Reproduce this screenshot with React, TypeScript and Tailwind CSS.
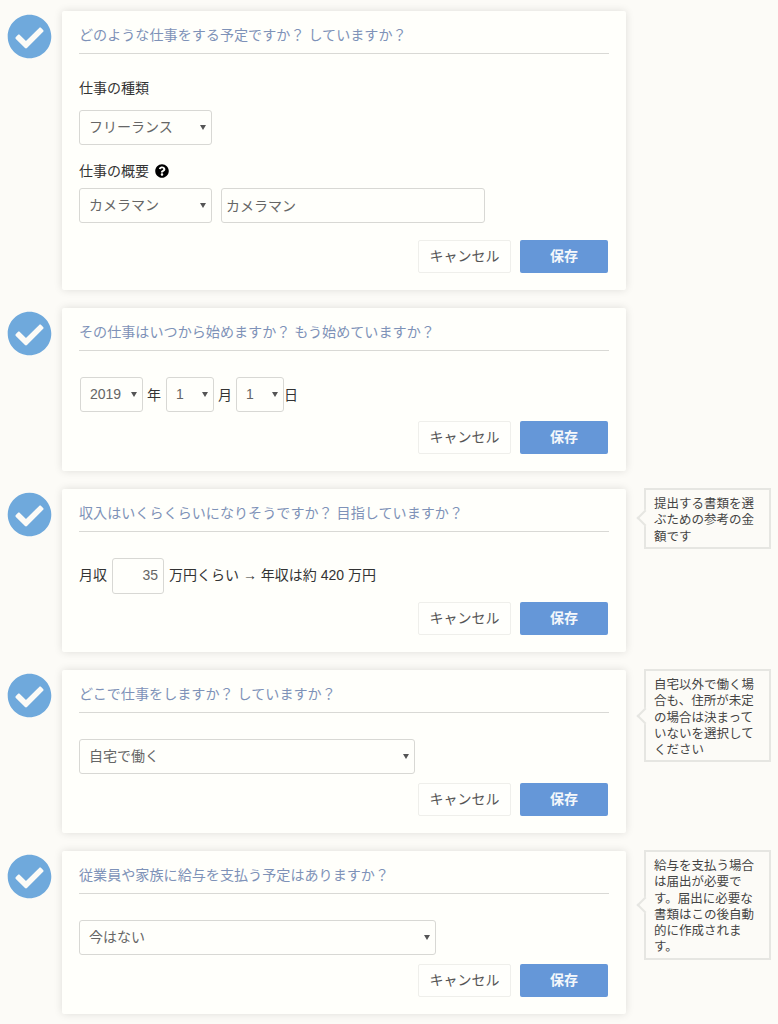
import { FaCheckCircle, FaQuestionCircle } from "react-icons/fa";
import type { ReactNode } from "react";

function Select({ value, className }: { value: string; className: string }) {
  return (
    <div className={"relative h-[35px] " + className}>
      <select
        defaultValue={value}
        className="h-full w-full appearance-none rounded-[3px] border border-[#d8d8d4] bg-[#fffffb] pb-[2px] pl-[9px] text-sm text-[#666] outline-none"
      >
        <option>{value}</option>
      </select>
      <span className="absolute right-[6px] top-[15px] h-0 w-0 border-x-[3px] border-t-[5px] border-x-transparent border-t-[#555]" />
    </div>
  );
}

function Buttons() {
  return (
    <div className="mr-px flex justify-end gap-[9px]">
      <button className="h-[33px] w-[93px] rounded-[2px] border border-[#efefeb] bg-[#fffffc] pb-[2px] text-sm text-[#555]">
        キャンセル
      </button>
      <button className="h-[33px] w-[88px] rounded-[2px] bg-[#6597d8] pb-[2px] text-sm font-bold text-[#f4f7fb]">
        保存
      </button>
    </div>
  );
}

function Section(props: { title: string; note?: string; children: ReactNode }) {
  return (
    <div className="flex items-start">
      <div className="w-[62px] pl-[7px] pt-[3px]">
        <FaCheckCircle className="h-[45px] w-[45px] text-[#6fa9dc]" />
      </div>
      <div className="w-[564px] rounded-[2px] bg-[#fffffb] px-[17px] pb-[17px] shadow-[0_0_8px_rgba(0,0,0,0.12)]">
        <div className="h-[43px] border-b border-[#d9d9d5] pt-[14px] text-[14.1px] leading-5 text-[#7e92b8]">
          {props.title}
        </div>
        {props.children}
        <Buttons />
      </div>
      {props.note && (
        <div className="relative -mt-px ml-[18px] w-[127px] border-2 border-[#e6e6e2] bg-[#fcfbf7] pb-[2px] pl-2 pr-3 pt-[6px] text-[12.5px] leading-[16.3px] text-[#444]">
          <span className="absolute left-[-7px] top-1/2 -mt-[6px] h-3 w-3 rotate-45 border-b-2 border-l-2 border-[#e6e6e2] bg-[#fcfbf7]" />
          {props.note}
        </div>
      )}
    </div>
  );
}

export default function App() {
  return (
    <div
      className="flex min-h-screen flex-col gap-[18px] bg-[#fcfbf7] pt-[11px] text-sm text-[#333]"
      style={{ fontFamily: '"Liberation Sans", "Noto Sans CJK JP", sans-serif' }}
    >
      <Section title="どのような仕事をする予定ですか？ していますか？">
        <div className="mb-[17px]">
          <div className="mt-[24px] h-5 leading-5">仕事の種類</div>
          <Select value="フリーランス" className="mt-[12px] w-[133px]" />
          <div className="mt-[16px] flex h-5 items-center gap-[6px] leading-5">
            仕事の概要
            <FaQuestionCircle className="h-[14px] w-[14px] text-black" />
          </div>
          <div className="mt-[7px] flex gap-[9px]">
            <Select value="カメラマン" className="w-[133px]" />
            <input
              readOnly
              value="カメラマン"
              className="h-[35px] w-[264px] rounded-[3px] border border-[#d8d8d4] bg-[#fffffb] pb-[2px] pl-[4px] text-sm text-[#666] outline-none"
            />
          </div>
        </div>
      </Section>

      <Section title="その仕事はいつから始めますか？ もう始めていますか？">
        <div className="mb-[9px] mt-[26px] flex items-center pl-px">
          <Select value="2019" className="w-[63px]" />
          <span className="ml-[4px] mr-[5px]">年</span>
          <Select value="1" className="w-[48px]" />
          <span className="mx-[4px]">月</span>
          <Select value="1" className="w-[48px]" />
          <span>日</span>
        </div>
      </Section>

      <Section
        title="収入はいくらくらいになりそうですか？ 目指していますか？"
        note="提出する書類を選ぶための参考の金額です"
      >
        <div className="mb-[8px] mt-[26px] flex items-center">
          <span className="pb-[2px]">月収</span>
          <input
            readOnly
            value="35"
            className="ml-[5px] mr-[5px] h-[36px] w-[52px] rounded-[3px] border border-[#d8d8d4] bg-[#fffffb] pb-[2px] pr-[5px] text-right text-sm text-[#666] outline-none"
          />
          <span className="pb-[2px]">万円くらい → 年収は約 420 万円</span>
        </div>
      </Section>

      <Section
        title="どこで仕事をしますか？ していますか？"
        note="自宅以外で働く場合も、住所が未定の場合は決まっていないを選択してください"
      >
        <Select value="自宅で働く" className="mb-[9px] mt-[26px] w-[336px]" />
      </Section>

      <Section
        title="従業員や家族に給与を支払う予定はありますか？"
        note="給与を支払う場合は届出が必要です。届出に必要な書類はこの後自動的に作成されます。"
      >
        <Select value="今はない" className="mb-[9px] mt-[26px] w-[357px]" />
      </Section>
    </div>
  );
}
